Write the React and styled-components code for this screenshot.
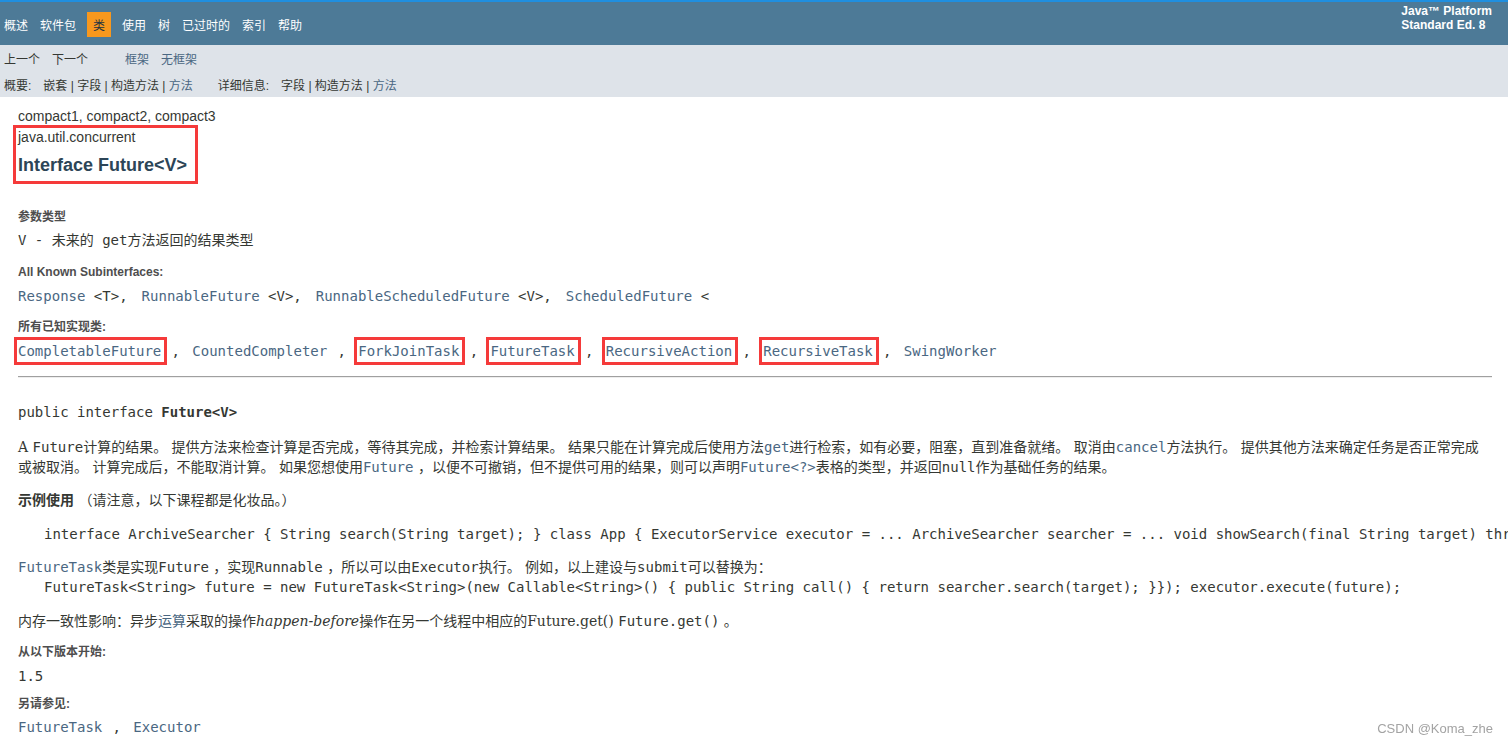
import React from "react";
import styled, { createGlobalStyle, css } from "styled-components";

const sans = `"Liberation Sans", Arial, "Noto Sans CJK SC", sans-serif`;
const mono = `"DejaVu Sans Mono", "Liberation Mono", "Noto Sans CJK SC", monospace`;
const serif = `"DejaVu Serif", Georgia, "Noto Sans CJK SC", serif`;

const color = {
  text: "#353833",
  link: "#4a6782",
  title: "#2c4557",
  label: "#4e4e4e",
  nav: "#4d7a97",
  sub: "#dee3e9",
  active: "#f8981d",
  mark: "#f53a3a",
};

const Global = createGlobalStyle`
  html, body {
    margin: 0;
    padding: 0;
    overflow: hidden;
    background: #fff;
  }
`;

const Page = styled.div`
  font-family: ${sans};
  color: ${color.text};
`;

const TopNav = styled.header`
  display: flex;
  justify-content: space-between;
  align-items: flex-start;
  height: 43px;
  background: ${color.nav};
  border-top: 2px solid #1f8fe0;
`;

const NavList = styled.ul`
  display: flex;
  list-style: none;
  margin: 10px 0 0 -2px;
  padding: 0;
`;

const NavItem = styled.li`
  height: 21px;
  line-height: 21px;
  padding: 4px 6px 0;
  font-size: 12px;
  color: #fff;
  ${(p) =>
    p.$active &&
    css`
      margin: 0 5px;
      background: ${color.active};
      color: #253441;
    `}
`;

const About = styled.div`
  margin-top: 2px;
  padding-right: 16px;
  font-size: 12px;
  font-weight: bold;
  line-height: 14px;
  color: #fff;
`;

const SubNav = styled.div`
  background: ${color.sub};
  padding: 7px 0 3px 4px;
  font-size: 12px;
`;

const SubRow = styled.div`
  display: flex;
  line-height: 16px;
  margin-top: ${(p) => p.$mt || 0}px;
`;

const SubLink = styled.span`
  margin-right: ${(p) => p.$gap ?? 12}px;
  color: ${(p) => (p.$link ? color.link : color.text)};
`;

const Group = styled.span`
  margin-right: 25px;
`;

const GroupLabel = styled.span`
  margin-right: 12px;
`;

const Content = styled.main`
  padding: 0 16px 0 18px;
`;

const Profile = styled.div`
  margin-top: 9px;
  font-size: 14px;
  line-height: 20px;
`;

const Header = styled.div`
  position: relative;
  width: fit-content;
  margin-top: 1px;
  &::after {
    content: "";
    position: absolute;
    top: -2px;
    left: -5px;
    right: -11px;
    bottom: -7px;
    border: 3px solid ${color.mark};
  }
`;

const PackageName = styled.div`
  font-size: 14px;
  line-height: 20px;
`;

const Title = styled.h2`
  margin: 7px 0 0;
  font-size: 18px;
  line-height: 23px;
  font-weight: bold;
  color: ${color.title};
`;

const Dt = styled.div`
  margin-top: ${(p) => p.$mt}px;
  padding-top: 1px;
  font-size: 12px;
  line-height: 15px;
  font-weight: bold;
  color: ${color.label};
`;

const Dd = styled.div`
  margin-top: ${(p) => p.$mt}px;
  font-family: ${mono};
  font-size: 14px;
  line-height: 20px;
  white-space: nowrap;
`;

const Link = styled.span`
  position: relative;
  color: ${color.link};
  ${(p) =>
    p.$boxed &&
    css`
      &::after {
        content: "";
        position: absolute;
        top: -6px;
        bottom: -6px;
        left: -4px;
        right: -6px;
        border: 3px solid ${color.mark};
      }
    `}
`;

const Sep = styled.span`
  display: inline-block;
  margin: 0 12.3px 0 10.3px;
`;

const TypeArg = styled.span`
  margin-right: 14px;
`;

const Rule = styled.hr`
  margin: 15px 0 0;
  height: 0;
  border: none;
  border-top: 1px solid #a0a0a0;
  border-bottom: 1px solid #eeeeee;
`;

const Signature = styled.div`
  margin-top: 24px;
  font-family: ${mono};
  font-size: 14px;
  line-height: 20px;
  b {
    font-weight: bold;
  }
`;

const Block = styled.div`
  margin: ${(p) => p.$mt}px 10px 0 0;
  font-family: ${serif};
  font-size: 14px;
  line-height: 20px;
  b {
    font-weight: bold;
  }
  i {
    font-style: italic;
  }
`;

const Code = styled.code`
  font-family: ${mono};
  font-size: 14px;
  color: ${(p) => (p.$link ? color.link : "inherit")};
`;

const Pre = styled.pre`
  margin: ${(p) => p.$mt}px -16px 0 0;
  padding-left: 26px;
  font-family: ${mono};
  font-size: 14px;
  line-height: 20px;
  white-space: pre;
  overflow: hidden;
`;

const Watermark = styled.div`
  position: fixed;
  right: 15px;
  bottom: 8px;
  font-family: ${sans};
  font-size: 13px;
  line-height: 16px;
  color: #a3a3a3;
`;

const navItems = ["概述", "软件包", "类", "使用", "树", "已过时的", "索引", "帮助"];

const subinterfaces = [
  ["Response", " <T>,"],
  ["RunnableFuture", " <V>,"],
  ["RunnableScheduledFuture", " <V>,"],
  ["ScheduledFuture", " <"],
];

const implementations = [
  ["CompletableFuture", true],
  ["CountedCompleter", false],
  ["ForkJoinTask", true],
  ["FutureTask", true],
  ["RecursiveAction", true],
  ["RecursiveTask", true],
  ["SwingWorker", false],
];

function LinkList({ items }) {
  return items.map(([name, boxed], i) => (
    <React.Fragment key={name}>
      <Link $boxed={boxed}>{name}</Link>
      {i < items.length - 1 && <Sep>,</Sep>}
    </React.Fragment>
  ));
}

export default function App() {
  return (
    <Page>
      <Global />
      <TopNav>
        <NavList>
          {navItems.map((item) => (
            <NavItem key={item} $active={item === "类"}>
              {item}
            </NavItem>
          ))}
        </NavList>
        <About>
          Java™ Platform
          <br />
          Standard Ed. 8
        </About>
      </TopNav>

      <SubNav>
        <SubRow>
          <SubLink>上一个</SubLink>
          <SubLink $gap={37}>下一个</SubLink>
          <SubLink $link>框架</SubLink>
          <SubLink $link>无框架</SubLink>
        </SubRow>
        <SubRow $mt={10}>
          <Group>
            <GroupLabel>概要:</GroupLabel>
            嵌套 | 字段 | 构造方法 | <Link>方法</Link>
          </Group>
          <Group>
            <GroupLabel>详细信息:</GroupLabel>
            字段 | 构造方法 | <Link>方法</Link>
          </Group>
        </SubRow>
      </SubNav>

      <Content>
        <Profile>compact1, compact2, compact3</Profile>
        <Header>
          <PackageName>java.util.concurrent</PackageName>
          <Title>Interface Future&lt;V&gt;</Title>
        </Header>

        <Dt $mt={32}>参数类型</Dt>
        <Dd $mt={5}>V - 未来的 get方法返回的结果类型</Dd>

        <Dt $mt={14}>All Known Subinterfaces:</Dt>
        <Dd $mt={6}>
          {subinterfaces.map(([name, arg], i) => (
            <React.Fragment key={name}>
              <Link>{name}</Link>
              {i < subinterfaces.length - 1 ? <TypeArg>{arg}</TypeArg> : arg}
            </React.Fragment>
          ))}
        </Dd>

        <Dt $mt={13}>所有已知实现类:</Dt>
        <Dd $mt={6}>
          <LinkList items={implementations} />
        </Dd>

        <Rule />

        <Signature>
          public interface <b>Future&lt;V&gt;</b>
        </Signature>

        <Block $mt={15}>
          A <Code>Future</Code>计算的结果。 提供方法来检查计算是否完成，等待其完成，并检索计算结果。
          结果只能在计算完成后使用方法<Code $link>get</Code>进行检索，如有必要，阻塞，直到准备就绪。
          取消由<Code $link>cancel</Code>方法执行。
          提供其他方法来确定任务是否正常完成或被取消。 计算完成后，不能取消计算。
          如果您想使用<Code $link>Future</Code> ，以便不可撤销，但不提供可用的结果，则可以声明
          <Code $link>Future&lt;?&gt;</Code>表格的类型，并返回<Code>null</Code>作为基础任务的结果。
        </Block>

        <Block $mt={13}>
          <b>示例使用</b> （请注意，以下课程都是化妆品。）
        </Block>

        <Pre $mt={14}>
          interface ArchiveSearcher {"{"} String search(String target); {"}"} class App {"{"} ExecutorService executor = ... ArchiveSearcher searcher = ... void showSearch(final String target) throws InterruptedException {"{"} Future&lt;String&gt; future = executor.submit(...
        </Pre>

        <Block $mt={13}>
          <Code $link>FutureTask</Code>类是实现<Code>Future</Code> ，实现<Code>Runnable</Code>{" "}
          ，所以可以由<Code>Executor</Code>执行。 例如，以上建设与<Code>submit</Code>可以替换为：
        </Block>
        <Pre $mt={0}>
          FutureTask&lt;String&gt; future = new FutureTask&lt;String&gt;(new Callable&lt;String&gt;() {"{"} public String call() {"{"} return searcher.search(target); {"}}"}); executor.execute(future);
        </Pre>

        <Block $mt={14}>
          内存一致性影响：异步<Link>运算</Link>采取的操作<i>happen-before</i>
          操作在另一个线程中相应的Future.get() <Code>Future.get()</Code> 。
        </Block>

        <Dt $mt={13}>从以下版本开始:</Dt>
        <Dd $mt={6}>1.5</Dd>

        <Dt $mt={10}>另请参见:</Dt>
        <Dd $mt={5}>
          <LinkList
            items={[
              ["FutureTask", false],
              ["Executor", false],
            ]}
          />
        </Dd>
      </Content>

      <Watermark>CSDN @Koma_zhe</Watermark>
    </Page>
  );
}
